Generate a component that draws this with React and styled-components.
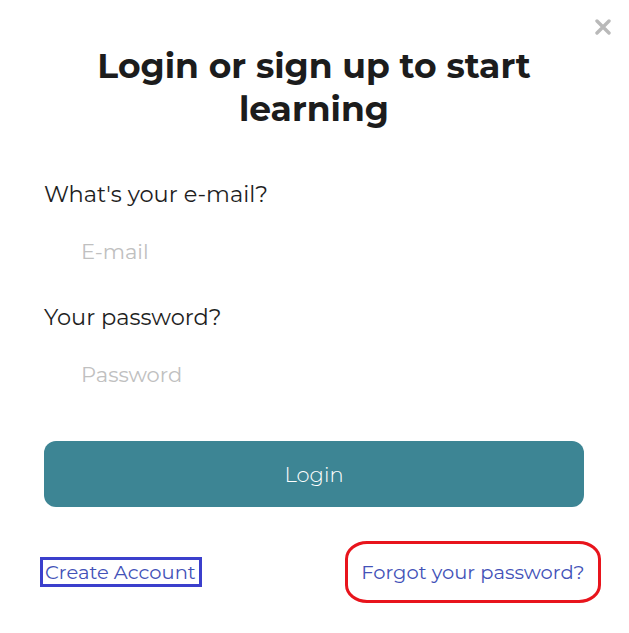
import React from 'react';
import styled, { createGlobalStyle } from 'styled-components';

const GlobalStyle = createGlobalStyle`
	html, body {
		margin: 0;
		padding: 0;
		background: #ffffff;
	}
	body {
		font-family: "Montserrat", "DejaVu Sans", "Noto Sans", sans-serif;
	}
`

const Modal = styled.div`
	position: relative;
	width: 629px;
	height: 633px;
	box-sizing: border-box;
	padding: 45px 45px 0 44px;
	display: flex;
	flex-direction: column;
	background: #ffffff;
`

const CloseButton = styled.button`
	position: absolute;
	top: 17px;
	right: 16px;
	width: 20px;
	height: 20px;
	padding: 0;
	border: none;
	background: none;
	display: flex;
	align-items: center;
	justify-content: center;
`

const Title = styled.h1`
	margin: 0 0 48px;
	font-size: 34.5px;
	line-height: 43px;
	font-weight: 700;
	color: #1c1c1c;
	text-align: center;
	padding: 0 30px;
`

const Field = styled.div`
	display: flex;
	flex-direction: column;
	margin-bottom: ${props => props.last ? '42px' : '26px'};
`

const Label = styled.label`
	font-size: 22.5px;
	line-height: 30px;
	color: #1e1e1e;
	margin-bottom: 17px;
`

const Input = styled.input`
	height: 50px;
	box-sizing: border-box;
	border: none;
	outline: none;
	padding: 0 0 0 37px;
	font-family: inherit;
	font-size: 21px;
	color: #333;
	background: transparent;
	&::placeholder {
		color: #c0c0c0;
	}
`

const LoginButton = styled.button`
	height: 66px;
	border: none;
	border-radius: 12px;
	background: #3d8594;
	color: #ffffff;
	font-family: inherit;
	font-size: 21px;
	font-weight: 300;
	margin-bottom: 34px;
`

const LinkRow = styled.div`
	display: flex;
	align-items: center;
	justify-content: space-between;
	margin-left: -4px;
	margin-right: -17px;
`

const CreateLink = styled.a`
	border: 3px solid #3b3fcc;
	padding: 0 3px 0 2px;
	line-height: 24px;
	font-size: 19.5px;
	color: #4352b8;
	text-decoration: none;
`

const ForgotWrap = styled.div`
	width: 256px;
	height: 62px;
	box-sizing: border-box;
	border: 3px solid #e8141c;
	border-radius: 22px / 18px;
	display: flex;
	align-items: center;
	justify-content: center;
`

const ForgotLink = styled.a`
	font-size: 19.5px;
	color: #4352b8;
	text-decoration: none;
`

function App() {
	return (
		<>
			<GlobalStyle />
			<Modal>
				<CloseButton aria-label="close">
					<svg width="16" height="16" viewBox="0 0 16 16">
						<path d="M2 2 L14 14 M14 2 L2 14" stroke="#b9b9b9" strokeWidth="3.4" strokeLinecap="round" />
					</svg>
				</CloseButton>
				<Title>Login or sign up to start learning</Title>
				<Field>
					<Label>What's your e-mail?</Label>
					<Input type="email" placeholder="E-mail" />
				</Field>
				<Field last>
					<Label>Your password?</Label>
					<Input type="password" placeholder="Password" />
				</Field>
				<LoginButton>Login</LoginButton>
				<LinkRow>
					<CreateLink href="#">Create Account</CreateLink>
					<ForgotWrap>
						<ForgotLink href="#">Forgot your password?</ForgotLink>
					</ForgotWrap>
				</LinkRow>
			</Modal>
		</>
	);
}

export default App;
